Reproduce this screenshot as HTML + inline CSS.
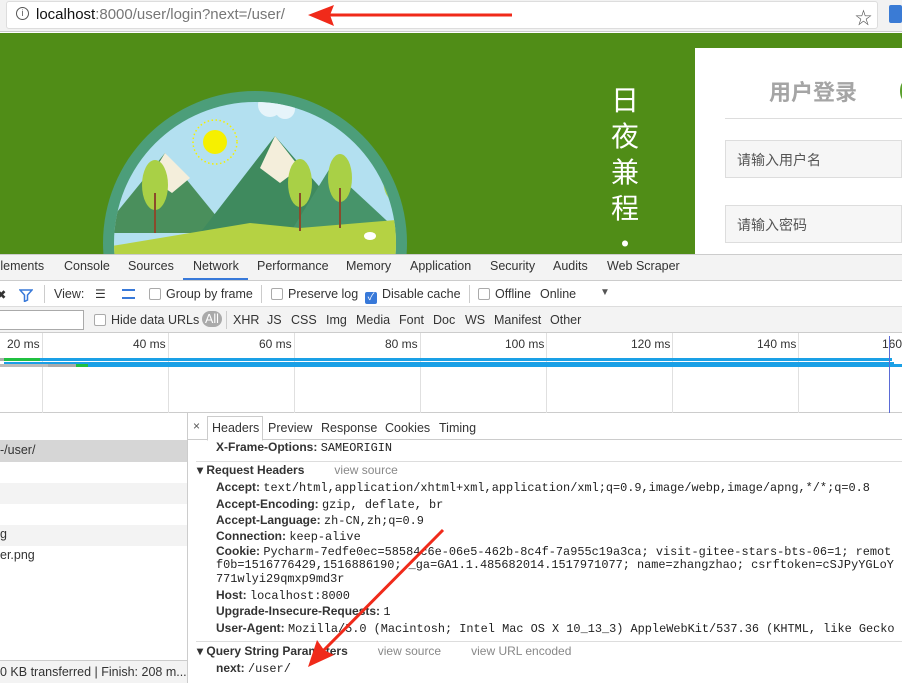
<!DOCTYPE html>
<html><head><meta charset="utf-8"><style>
*{margin:0;padding:0;box-sizing:border-box}
body{width:902px;height:683px;overflow:hidden;position:relative;font-family:"Liberation Sans","Noto Sans CJK SC",sans-serif;font-size:12px;color:#222;background:#fff}
.a{position:absolute;white-space:nowrap}
.mono{font-family:"Liberation Mono","DejaVu Sans Mono",monospace;font-size:11.9px}
.k{font-weight:bold;color:#333;font-size:12px}
.cb{display:inline-block;width:12px;height:12px;border:1px solid #aaa;border-radius:2px;background:#fff;vertical-align:-2px;margin-right:5px}
.g{color:#888}
</style></head><body>
<!-- address bar -->
<div class="a" style="left:0;top:0;width:902px;height:32px;background:#f2f2f2;border-bottom:1px solid #ccc"></div>
<div class="a" style="left:6px;top:1px;width:872px;height:28px;background:#fff;border:1px solid #ddd;border-radius:3px"></div>
<div class="a" style="left:16px;top:7px;width:13px;height:13px;border:1.3px solid #555;border-radius:50%;font-size:9px;text-align:center;line-height:11px;color:#555">i</div>
<div class="a" style="left:36px;top:6px;font-size:15px;color:#777"><span style="color:#111">localhost</span>:8000/user/login?next=/user/</div>
<div class="a" style="left:855px;top:4px;font-size:17px;color:#555">☆</div>
<div class="a" style="left:889px;top:5px;width:13px;height:18px;background:#3a7bd5;border-radius:2px"></div>
<!-- green -->
<div class="a" style="left:0;top:33px;width:902px;height:221px;background:#508d17;overflow:hidden">
 <svg width="902" height="221" style="position:absolute;left:0;top:0">
  <circle cx="255" cy="210" r="152" fill="#4c9e7a"/>
  <clipPath id="c"><circle cx="255" cy="210" r="141"/></clipPath>
  <g clip-path="url(#c)">
   <rect x="100" y="50" width="320" height="200" fill="#b3e0f0"/>
   <circle cx="270" cy="72" r="12" fill="#e6f4fa"/>
   <circle cx="285" cy="76" r="10" fill="#e6f4fa"/>
   <circle cx="215" cy="109" r="12" fill="#f6f000"/>
   <circle cx="215" cy="109" r="22" fill="none" stroke="#f6f000" stroke-width="1.5" stroke-dasharray="1.5 2.5"/>
   <polygon points="100,200 165,120 230,200" fill="#4a8f5c"/>
   <polygon points="165,120 150,145 172,160 190,145" fill="#f4eedb"/>
   <polygon points="200,200 275,103 360,200" fill="#3f8a5e"/>
   <polygon points="275,103 260,135 280,150 300,135" fill="#f4eedb"/>
   <polygon points="290,200 330,135 400,200" fill="#47946a"/>
   <polygon points="100,215 250,190 300,195 420,185 420,230 100,230" fill="#b5d243"/>
   <ellipse cx="155" cy="152" rx="13" ry="25" fill="#a9d046"/>
   <ellipse cx="300" cy="150" rx="12" ry="24" fill="#a9d046"/>
   <ellipse cx="340" cy="145" rx="12" ry="24" fill="#a9d046"/>
   <ellipse cx="393" cy="145" rx="10" ry="22" fill="#a9d046"/>
   <rect x="154" y="160" width="2" height="40" fill="#8b4a2b"/>
   <rect x="299" y="160" width="2" height="38" fill="#8b4a2b"/>
   <rect x="339" y="155" width="2" height="40" fill="#8b4a2b"/>
   <ellipse cx="370" cy="203" rx="6" ry="4" fill="#fff"/>
  </g>
 </svg>
 <div class="a" style="left:611px;top:48px;color:#fff;font-size:28px;line-height:36px;white-space:normal;width:30px;font-family:'Noto Sans CJK SC',sans-serif">日<br>夜<br>兼<br>程<br>·</div>
 <div class="a" style="left:695px;top:15px;width:207px;height:206px;background:#fff">
  <div class="a" style="left:74px;top:27px;font-size:22px;font-weight:bold;color:#a5a5a5">用户登录</div>
  <div class="a" style="left:205px;top:33px;width:10px;height:20px;border-radius:50%;background:#5aa02c"></div>
  <div class="a" style="left:30px;top:70px;width:177px;height:1px;background:#ddd"></div>
  <div class="a" style="left:30px;top:92px;width:177px;height:38px;background:#f6f6f6;border:1px solid #ddd;font-size:14px;color:#555;padding:9px 11px">请输入用户名</div>
  <div class="a" style="left:30px;top:157px;width:177px;height:38px;background:#f6f6f6;border:1px solid #ddd;font-size:14px;color:#555;padding:9px 11px">请输入密码</div>
 </div>
</div>
<!-- devtools tabs -->
<div class="a" style="left:0;top:254px;width:902px;height:27px;background:#f3f3f3;border-top:1px solid #ccc;border-bottom:1px solid #ccc"></div>
<div class="a" style="top:259px;left:0;font-size:12.5px;color:#333;word-spacing:0">
<span style="position:absolute;left:-8px">Elements</span><span style="position:absolute;left:64px">Console</span><span style="position:absolute;left:128px">Sources</span><span style="position:absolute;left:193px">Network</span><span style="position:absolute;left:257px">Performance</span><span style="position:absolute;left:346px">Memory</span><span style="position:absolute;left:410px">Application</span><span style="position:absolute;left:490px">Security</span><span style="position:absolute;left:553px">Audits</span><span style="position:absolute;left:607px">Web Scraper</span></div>
<div class="a" style="left:183px;top:278px;width:65px;height:2px;background:#3879d9"></div>
<!-- toolbar -->
<div class="a" style="left:0;top:281px;width:902px;height:26px;background:#fff;border-bottom:1px solid #ddd"></div>
<div class="a" style="left:0;top:287px;font-size:12.5px;color:#333">
<span style="position:absolute;left:-4px">✖</span>
<svg class="a" style="left:19px;top:1px" width="14" height="14"><path d="M1 2h12l-4.5 5v5l-3 1.5v-6.5z" fill="none" stroke="#3879d9" stroke-width="1.5"/></svg>
<span style="position:absolute;left:44px;top:-2px;width:1px;height:18px;background:#ccc"></span>
<span style="position:absolute;left:54px">View:</span>
<span style="position:absolute;left:95px;top:0;font-size:12px">☰</span>
<span style="position:absolute;left:122px;top:2px;width:13px;height:10px;border-top:2px solid #3879d9;border-bottom:2px solid #3879d9"></span>
<span style="position:absolute;left:149px"><i class="cb"></i>Group by frame</span>
<span style="position:absolute;left:261px;top:-2px;width:1px;height:18px;background:#ccc"></span>
<span style="position:absolute;left:271px"><i class="cb"></i>Preserve log</span>
<span style="position:absolute;left:365px"><i class="cb" style="background:#3879d9;border-color:#3879d9;color:#fff;font-size:10px;line-height:10px;text-align:center;font-style:normal">✓</i>Disable cache</span>
<span style="position:absolute;left:469px;top:-2px;width:1px;height:18px;background:#ccc"></span>
<span style="position:absolute;left:478px"><i class="cb"></i>Offline</span>
<span style="position:absolute;left:540px">Online</span>
<span style="position:absolute;left:600px;font-size:10px;color:#555">▼</span>
</div>
<!-- filter row -->
<div class="a" style="left:0;top:307px;width:902px;height:26px;background:#f3f3f3;border-bottom:1px solid #ccc"></div>
<div class="a" style="left:-5px;top:310px;width:89px;height:20px;background:#fff;border:1px solid #aaa"></div>
<div class="a" style="left:0;top:313px;font-size:12.5px;color:#333">
<span style="position:absolute;left:94px"><i class="cb"></i>Hide data URLs</span>
<span style="position:absolute;left:202px;top:-2px;background:#aaa;color:#fff;border-radius:8px;padding:1px 3px">All</span>
<span style="position:absolute;left:226px;top:-2px;width:1px;height:18px;background:#ccc"></span>
<span style="position:absolute;left:233px">XHR</span><span style="position:absolute;left:267px">JS</span><span style="position:absolute;left:291px">CSS</span><span style="position:absolute;left:326px">Img</span><span style="position:absolute;left:356px">Media</span><span style="position:absolute;left:399px">Font</span><span style="position:absolute;left:433px">Doc</span><span style="position:absolute;left:465px">WS</span><span style="position:absolute;left:494px">Manifest</span><span style="position:absolute;left:550px">Other</span>
</div>
<!-- timeline -->
<div class="a" style="left:0;top:333px;width:902px;height:80px;background:#fff;border-bottom:1px solid #ccc"></div>
<div class="a" style="left:42px;top:333px;width:1px;height:80px;background:#e0e0e0"></div>
<div class="a" style="left:168px;top:333px;width:1px;height:80px;background:#e0e0e0"></div>
<div class="a" style="left:294px;top:333px;width:1px;height:80px;background:#e0e0e0"></div>
<div class="a" style="left:420px;top:333px;width:1px;height:80px;background:#e0e0e0"></div>
<div class="a" style="left:546px;top:333px;width:1px;height:80px;background:#e0e0e0"></div>
<div class="a" style="left:672px;top:333px;width:1px;height:80px;background:#e0e0e0"></div>
<div class="a" style="left:798px;top:333px;width:1px;height:80px;background:#e0e0e0"></div>
<div class="a" style="left:0;top:337px;font-size:12px;color:#333">
<span style="position:absolute;left:7px">20 ms</span><span style="position:absolute;left:133px">40 ms</span><span style="position:absolute;left:259px">60 ms</span><span style="position:absolute;left:385px">80 ms</span><span style="position:absolute;left:505px">100 ms</span><span style="position:absolute;left:631px">120 ms</span><span style="position:absolute;left:757px">140 ms</span><span style="position:absolute;left:882px">160</span></div>
<div class="a" style="left:0;top:358px;width:4px;height:3px;background:#aaa"></div>
<div class="a" style="left:4px;top:358px;width:36px;height:3px;background:#20c040"></div>
<div class="a" style="left:40px;top:358px;width:852px;height:3px;background:#1aa0e6"></div>
<div class="a" style="left:4px;top:362px;width:890px;height:3px;background:#1aa0e6"></div>
<div class="a" style="left:0;top:364px;width:48px;height:3px;background:#bbb"></div>
<div class="a" style="left:48px;top:364px;width:28px;height:3px;background:#aaa"></div>
<div class="a" style="left:76px;top:364px;width:12px;height:3px;background:#20c040"></div>
<div class="a" style="left:88px;top:364px;width:814px;height:3px;background:#1aa0e6"></div>
<div class="a" style="left:889px;top:336px;width:1px;height:77px;background:#5b6bd6"></div>
<!-- left list -->
<div class="a" style="left:0;top:413px;width:188px;height:270px;background:#fff;border-right:1px solid #ccc"></div>
<div class="a" style="left:0;top:440px;width:187px;height:22px;background:#d6d6d6"></div>
<div class="a" style="left:0;top:483px;width:187px;height:21px;background:#f3f3f3"></div>
<div class="a" style="left:0;top:525px;width:187px;height:21px;background:#f3f3f3"></div>
<div class="a" style="left:0;top:443px;font-size:12.5px;color:#333">-/user/</div>
<div class="a" style="left:0;top:527px;font-size:12.5px;color:#333">g</div>
<div class="a" style="left:0;top:548px;font-size:12.5px;color:#333">er.png</div>
<div class="a" style="left:0;top:660px;width:187px;height:23px;background:#f3f3f3;border-top:1px solid #ccc;font-size:12.5px;color:#333;padding:4px 0 0 0">0 KB transferred | Finish: 208 m...</div>
<!-- details -->
<div class="a" style="left:188px;top:413px;width:714px;height:27px;border-bottom:1px solid #ccc;background:#fff"></div>
<div class="a" style="left:193px;top:419px;font-size:12px;color:#555">×</div>
<div class="a" style="left:207px;top:416px;width:56px;height:25px;border:1px solid #ccc;border-bottom:1px solid #fff;background:#fff"></div>
<div class="a" style="left:0;top:421px;font-size:12.5px;color:#333">
<span style="position:absolute;left:212px">Headers</span><span style="position:absolute;left:268px">Preview</span><span style="position:absolute;left:321px">Response</span><span style="position:absolute;left:385px">Cookies</span><span style="position:absolute;left:439px">Timing</span></div>
<div class="a" style="left:216px;top:440px"><span class="k">X-Frame-Options:</span> <span class="mono">SAMEORIGIN</span></div>
<div class="a" style="left:196px;top:461px;width:706px;height:1px;background:#ddd"></div>
<div class="a" style="left:197px;top:463px"><span class="k">▾ Request Headers</span><span class="g" style="margin-left:30px">view source</span></div>
<div class="a" style="left:216px;top:480px"><span class="k">Accept:</span> <span class="mono">text/html,application/xhtml+xml,application/xml;q=0.9,image/webp,image/apng,*/*;q=0.8</span></div>
<div class="a" style="left:216px;top:497px"><span class="k">Accept-Encoding:</span> <span class="mono">gzip, deflate, br</span></div>
<div class="a" style="left:216px;top:513px"><span class="k">Accept-Language:</span> <span class="mono">zh-CN,zh;q=0.9</span></div>
<div class="a" style="left:216px;top:529px"><span class="k">Connection:</span> <span class="mono">keep-alive</span></div>
<div class="a" style="left:216px;top:544px"><span class="k">Cookie:</span> <span class="mono">Pycharm-7edfe0ec=58584c6e-06e5-462b-8c4f-7a955c19a3ca; visit-gitee-stars-bts-06=1; remot</span></div>
<div class="a mono" style="left:216px;top:558px">f0b=1516776429,1516886190; _ga=GA1.1.485682014.1517971077; name=zhangzhao; csrftoken=cSJPyYGLoY</div>
<div class="a mono" style="left:216px;top:572px">771wlyi29qmxp9md3r</div>
<div class="a" style="left:216px;top:588px"><span class="k">Host:</span> <span class="mono">localhost:8000</span></div>
<div class="a" style="left:216px;top:604px"><span class="k">Upgrade-Insecure-Requests:</span> <span class="mono">1</span></div>
<div class="a" style="left:216px;top:621px"><span class="k">User-Agent:</span> <span class="mono">Mozilla/5.0 (Macintosh; Intel Mac OS X 10_13_3) AppleWebKit/537.36 (KHTML, like Gecko</span></div>
<div class="a" style="left:196px;top:641px;width:706px;height:1px;background:#ddd"></div>
<div class="a" style="left:197px;top:644px"><span class="k">▾ Query String Parameters</span><span class="g" style="margin-left:30px">view source</span><span class="g" style="margin-left:30px">view URL encoded</span></div>
<div class="a" style="left:216px;top:661px"><span class="k">next:</span> <span class="mono">/user/</span></div>
<!-- arrows -->
<svg class="a" style="left:0;top:0" width="902" height="683">
 <line x1="512" y1="15" x2="330" y2="15" stroke="#f02a1a" stroke-width="3"/>
 <polygon points="308,15 334,5 330,15 334,26" fill="#f02a1a"/>
 <line x1="443" y1="530" x2="322" y2="652" stroke="#f02a1a" stroke-width="3"/>
 <polygon points="308,667 317,640 324,650 334,655" fill="#f02a1a"/>
</svg>
</body></html>
